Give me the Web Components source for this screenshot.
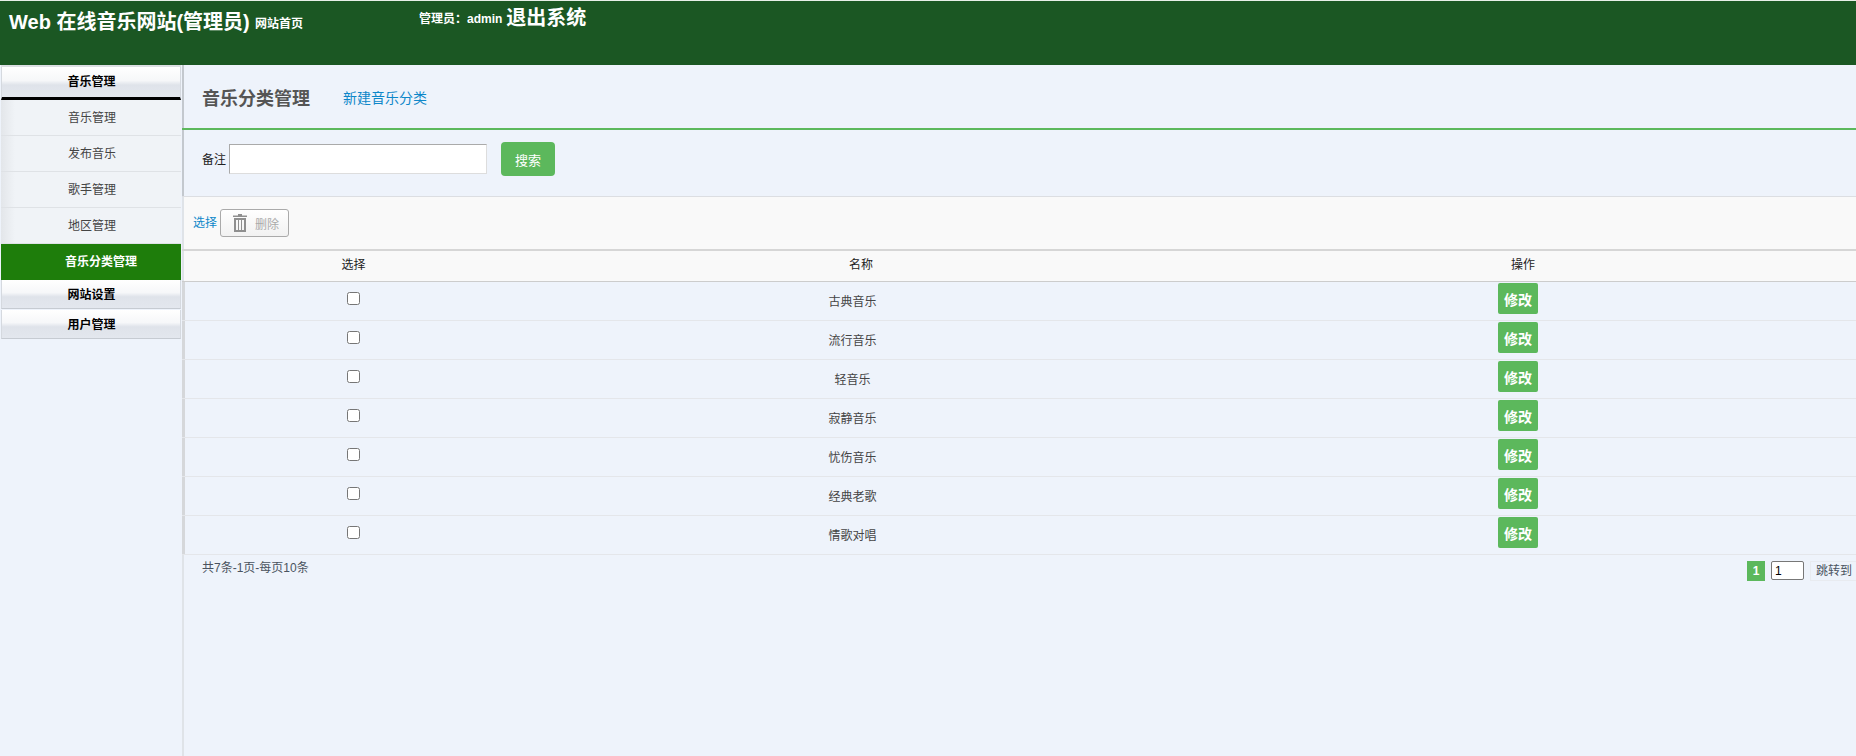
<!DOCTYPE html>
<html lang="zh">
<head>
<meta charset="utf-8">
<title>音乐分类管理</title>
<style>
  html, body { margin: 0; height: 100%; overflow: hidden; }
  body {
    font: 12px "Liberation Sans", "Noto Sans CJK SC", sans-serif;
    color: #333;
    background: #eef3fb;
  }
  music-admin { height: 756px; }
</style>
</head>
<body>
<music-admin>
  <app-header slot="header"></app-header>
  <side-nav slot="side">
    <nav-head>音乐管理</nav-head>
    <nav-item>音乐管理</nav-item>
    <nav-item>发布音乐</nav-item>
    <nav-item>歌手管理</nav-item>
    <nav-item>地区管理</nav-item>
    <nav-item active>音乐分类管理</nav-item>
    <nav-head closed>网站设置</nav-head>
    <nav-head closed>用户管理</nav-head>
  </side-nav>
  <page-title>音乐分类管理<a slot="action">新建音乐分类</a></page-title>
  <search-bar></search-bar>
  <tool-bar></tool-bar>
  <category-table>
    <category-row>古典音乐</category-row>
    <category-row>流行音乐</category-row>
    <category-row>轻音乐</category-row>
    <category-row>寂静音乐</category-row>
    <category-row>忧伤音乐</category-row>
    <category-row>经典老歌</category-row>
    <category-row>情歌对唱</category-row>
  </category-table>
  <page-bar></page-bar>
</music-admin>

<script>
const define = (name, html) => {
  const template = document.createElement('template')
  template.innerHTML = html
  customElements.define(name, class extends HTMLElement {
    constructor() {
      super()
      this.attachShadow({ mode: 'open' }).append(template.content.cloneNode(true))
    }
  })
}

define('music-admin', `
  <style>
    :host { display: grid; grid-template-columns: 182px 1fr; grid-template-rows: 65px 1fr; }
    .top { grid-column: 1 / 3; }
    .main { min-width: 0; box-shadow: inset 2px 0 #dfe3e8; }
  </style>
  <div class="top"><slot name="header"></slot></div>
  <slot name="side"></slot>
  <div class="main"><slot></slot></div>
`)

define('app-header', `
  <style>
    :host {
      display: block; height: 64px; background: #1b5723; color: #fff;
      border-top: 1px solid #e8efe8; font-weight: bold;
    }
    .row { display: flex; align-items: flex-start; padding-left: 9px; white-space: nowrap; }
    .title { font-size: 20px; line-height: 26px; width: 246px; margin-top: 8px; }
    .home { width: 164px; line-height: 16px; margin-top: 15px; }
    .admin { line-height: 16px; margin-top: 10px; }
    .exit { font-size: 20px; line-height: 26px; margin: 4px 0 0 4px; }
  </style>
  <div class="row">
    <span class="title">Web 在线音乐网站(管理员)</span>
    <span class="home">网站首页</span>
    <span class="admin">管理员：admin</span>
    <span class="exit">退出系统</span>
  </div>
`)

define('side-nav', `
  <style>
    :host {
      display: block; width: 182px; box-sizing: border-box; padding-top: 2px;
      background: #eef3fb;
    }
  </style>
  <slot></slot>
`)

define('nav-head', `
  <style>
    :host {
      display: block; box-sizing: border-box; height: 30px; margin: 0 1px;
      text-align: center; line-height: 30px; font-weight: bold; color: #000;
      background: linear-gradient(#fff 0%, #f6f7f9 45%, #dfe3ea 60%, #e3e7ee 100%);
      border: solid #d5d9df; border-width: 0 1px 1px; padding-left: 1px;
    }
    :host(:first-child) {
      height: 33px; border-bottom: 3px solid #000; box-shadow: 0 -2px #dcdfe3;
    }
    :host([closed]) { height: 29px; border-bottom: 1px solid #c6cbd2; margin-bottom: 1px; }
  </style>
  <slot></slot>
`)

define('nav-item', `
  <style>
    :host {
      display: block; box-sizing: border-box; height: 36px; margin: 0 1px;
      line-height: 36px; text-align: center; color: #444; padding-left: 2px;
      background: linear-gradient(90deg, #e3e6ea, #f0f3f7 14px);
      border-bottom: 1px solid #dfe2e6;
    }
    :host([active]) {
      background: #1e7d0b; color: #fff; font-weight: bold; border-bottom: 0; padding-left: 20px;
    }
  </style>
  <slot></slot>
`)

define('page-title', `
  <style>
    :host {
      display: flex; align-items: center; box-sizing: border-box; height: 65px;
      padding: 0 0 0 20px; border-bottom: 2px solid #5cb85c;
      font-size: 18px; font-weight: bold; color: #555;
      box-shadow: inset 2px 0 #c3c8ce;
    }
    ::slotted(a) { margin-left: 33px; font-size: 14px; font-weight: normal; color: #0d87c9; }
  </style>
  <slot></slot><slot name="action"></slot>
`)

define('search-bar', `
  <style>
    :host {
      display: flex; align-items: center; box-sizing: border-box; height: 66px;
      padding: 0 0 8px 20px; color: #222; box-shadow: inset 2px 0 #c3c8ce;
    }
    span { margin-top: -2px; }
    input {
      box-sizing: border-box; width: 258px; height: 30px; margin-left: 3px;
      border: 1px solid #ddd; border-top-color: #aaa; border-left-color: #aaa; background: #fff;
      padding: 0 4px;
    }
    button {
      width: 54px; height: 34px; margin-left: 14px; border: 0; border-radius: 4px;
      background: #5cb85c; color: #fff; font: inherit; font-size: 13px;
    }
  </style>
  <span>备注</span><input type="text"><button>搜索</button>
`)

define('tool-bar', `
  <style>
    :host {
      display: flex; align-items: center; box-sizing: border-box; height: 53px;
      padding: 0 0 0 11px; background: #f9f9f9; border-top: 1px solid #dcdee2;
      box-shadow: inset 2px 0 #dfe3e8;
    }
    a { color: #0d87c9; margin-top: -3px; }
    button {
      display: flex; align-items: center; box-sizing: border-box; width: 69px; height: 28px;
      margin-left: 3px; padding: 0 0 0 12px; border: 1px solid #aaa; border-radius: 3px;
      background: linear-gradient(#fff, #f2f2f2); color: #aaa; font: inherit;
    }
    svg { width: 14px; height: 18px; margin-right: 8px; }
  </style>
  <a>选择</a>
  <button>
    <svg viewBox="0 0 14 18" fill="#8f8f8f">
      <path d="M5 0h4v1.5h5V3H0V1.5h5z"/>
      <path d="M1 4h12v14H1zM3 6v10h2V6zM6 6v10h2V6zM9 6v10h2V6z" fill-rule="evenodd"/>
    </svg>删除
  </button>
`)

define('category-table', `
  <style>
    :host { display: block; box-shadow: inset 3px 0 #d5d7da; }
    .head {
      display: grid; grid-template-columns: 343px 672px 652px; box-sizing: border-box; height: 33px;
      line-height: 29px; text-align: center; color: #222; background: #f9f9f9;
      border-top: 2px solid #d6d6d6; border-bottom: 1px solid #ccc;
      box-shadow: inset 2px 0 #dfe3e8;
    }
  </style>
  <div class="head"><span>选择</span><span>名称</span><span>操作</span></div>
  <slot></slot>
`)

define('category-row', `
  <style>
    :host {
      display: grid; grid-template-columns: 343px 655px 676px; box-sizing: border-box; height: 39px;
      align-items: center; text-align: center; color: #444;
      border-bottom: 1px solid #e4e6ea;
    }
    input { width: 13px; height: 13px; margin: 0 auto 5px; display: block; }
    .name { padding-bottom: 2px; }
    button {
      display: block; width: 40px; height: 31px; margin: 0 auto 5px; border: 0; border-radius: 2px;
      background: #5cb85c; color: #fff; font: bold 14px "Liberation Sans", "Noto Sans CJK SC", sans-serif;
      padding: 0;
    }
  </style>
  <span><input type="checkbox"></span>
  <span class="name"><slot></slot></span>
  <span><button>修改</button></span>
`)

define('page-bar', `
  <style>
    :host {
      display: flex; align-items: flex-start; justify-content: space-between;
      padding: 3px 0 0 20px; color: #4a5360;
    }
    .pager { display: flex; align-items: flex-start; padding-top: 3px; }
    .cur {
      width: 18px; height: 20px; line-height: 20px; text-align: center;
      background: #5cb85c; color: #fff; font-weight: bold;
    }
    input {
      box-sizing: border-box; width: 33px; height: 19px; margin: 0 6px; padding: 0 3px;
      border: 1px solid #777; border-radius: 2px; background: #fff; font: inherit; color: #000;
    }
    .jump {
      box-sizing: border-box; width: 46px; height: 20px; line-height: 18px; padding-left: 5px;
      border: 1px solid #e8ebf0; border-right: 0;
    }
  </style>
  <span>共7条-1页-每页10条</span>
  <div class="pager"><span class="cur">1</span><input value="1"><span class="jump">跳转到</span></div>
`)
</script>
</body>
</html>
